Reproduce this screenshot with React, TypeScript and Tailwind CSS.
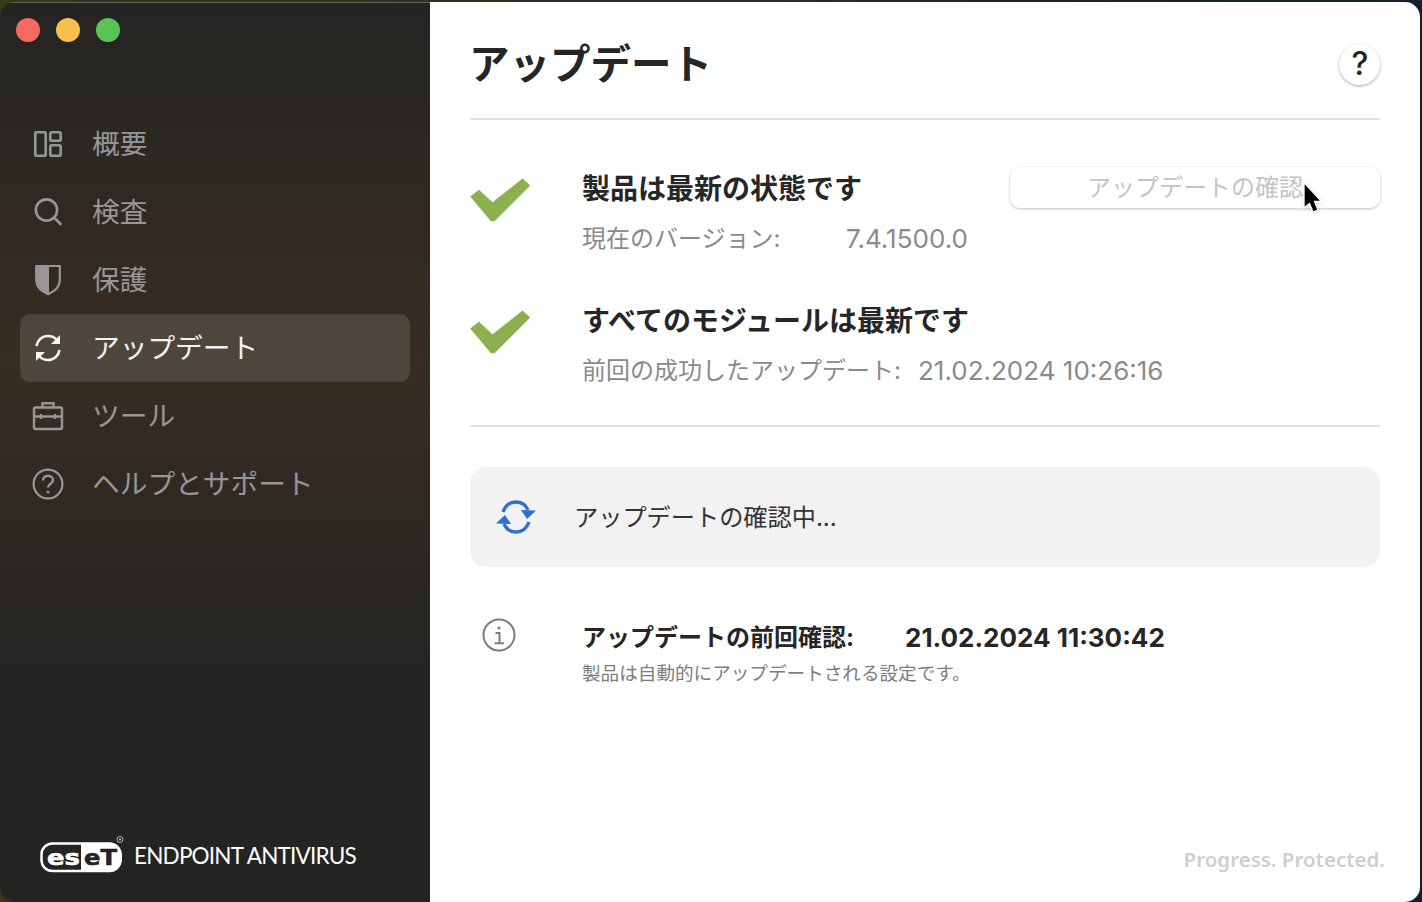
import React from "react";

const jp = "font-['Inter','Noto_Sans_CJK_JP',sans-serif]";

function Overview() {
  return (
    <svg width="30" height="28" viewBox="0 0 30 28" fill="none" stroke="currentColor" strokeWidth="2.6">
      <rect x="2.3" y="2.3" width="10.4" height="23.4" rx="1" />
      <rect x="17.3" y="2.3" width="10.4" height="8.4" rx="1.5" />
      <rect x="17.3" y="15.3" width="10.4" height="10.4" rx="1.5" />
    </svg>
  );
}
function Search() {
  return (
    <svg width="30" height="30" viewBox="0 0 30 30" fill="none" stroke="currentColor" strokeWidth="2.6" strokeLinecap="round">
      <circle cx="13.500" cy="13" r="10.6" />
      <path d="M21.500 21l6 6" />
    </svg>
  );
}
function Shield() {
  return (
    <svg width="28" height="32" viewBox="0 0 28 32" fill="none">
      <path d="M2.2 2h23.6v14c0 7-5.5 11.5-11.8 14.2C7.7 27.500 2.200 23 2.200 16z" stroke="currentColor" strokeWidth="2.200" strokeLinejoin="round" />
      <path d="M2.200 2H15v28C8 27.500 2.200 23 2.200 16z" fill="currentColor" />
    </svg>
  );
}
function Sync({ color = "currentColor", w = 30 }: { color?: string; w?: number }) {
  return (
    <svg width={w} height={w} viewBox="0 0 30 30" fill="none">
      <path d="M3.500 13C4.500 7 9 3 15 3c3.700 0 6.700 1.400 9 4" stroke={color} strokeWidth="2.600" />
      <path d="M26.500 17C25.500 23 21 27 15 27c-3.700 0-6.700-1.400-9-4" stroke={color} strokeWidth="2.600" />
      <path d="M27 2v9h-9z" fill={color} />
      <path d="M3 28v-9h9z" fill={color} />
    </svg>
  );
}
function Briefcase() {
  return (
    <svg width="32" height="30" viewBox="0 0 32 30" fill="none" stroke="currentColor" strokeWidth="2.400">
      <rect x="2" y="6.500" width="28" height="21.500" rx="1.500" />
      <path d="M10.500 6.500V2.200h11v4.300M2 15.500h28M9 13v5M23 13v5" />
    </svg>
  );
}
function Help() {
  return (
    <svg width="32" height="32" viewBox="0 0 32 32" fill="none" stroke="currentColor" strokeWidth="2.200">
      <circle cx="16" cy="16" r="14.400" />
      <path d="M11 12.500c0-3 2.200-4.800 5-4.800s5 1.800 5 4.400c0 3.900-5 3.700-5 7.400" strokeWidth="2.400" />
      <circle cx="16" cy="24" r="1.500" fill="currentColor" stroke="none" />
    </svg>
  );
}
function Check() {
  return (
    <svg width="60" height="44" viewBox="0 0 60 44">
      <path d="M0.500 18.500L9 12l13.500 12.500L52.500 0.800 60 7.500 24.500 43h-3.500z" fill="#8bb14f" stroke="#8bb14f" strokeWidth="0.500" strokeLinejoin="round" />
    </svg>
  );
}
function Info() {
  return (
    <svg width="34" height="34" viewBox="0 0 34 34" fill="none" stroke="#7d7d7d" strokeWidth="2">
      <circle cx="17" cy="17" r="15.500" />
      <circle cx="17" cy="10" r="1.600" fill="#7d7d7d" stroke="none" />
      <path d="M13.500 15H17.500V25M12.500 25.200H22" />
    </svg>
  );
}
function BlueSync() {
  return (
    <svg width="42" height="36" viewBox="0 0 42 36" fill="none">
      <path d="M8 13C10.500 6 15 3 21 3c5.500 0 9.500 2.500 12 8" stroke="#2f6fd6" strokeWidth="3.400" />
      <path d="M34 23c-2.500 7-7 10-13 10-5.500 0-9.500-2.500-12-8" stroke="#2f6fd6" strokeWidth="3.400" />
      <path d="M41 11.500L32 20l-6-9z" fill="#2f6fd6" />
      <path d="M1 24.500L10 16l6 9z" fill="#2f6fd6" />
    </svg>
  );
}
function Logo() {
  return (
    <svg width="84" height="38" viewBox="0 0 84 38" className="shrink-0">
      <rect x="1.500" y="7.500" width="79" height="27.500" rx="11" fill="none" stroke="#fff" strokeWidth="2.500" />
      <path d="M41 7h27a14 14 0 0 1 14 14a14 14 0 0 1-14 15H41z" fill="#fff" />
      <text x="7" y="28.500" fontFamily="'DejaVu Sans'" fontWeight="700" fontSize="21" fill="#fff" stroke="#fff" strokeWidth="0.600" textLength="33" lengthAdjust="spacingAndGlyphs">es</text>
      <text x="44" y="28.500" fontFamily="'DejaVu Sans'" fontWeight="700" fontSize="21" fill="#242422" stroke="#242422" strokeWidth="0.600" textLength="33" lengthAdjust="spacingAndGlyphs">eT</text>
      <circle cx="80" cy="3.500" r="3" fill="none" stroke="#ddd" strokeWidth="0.800" />
      <circle cx="80" cy="3.500" r="1" fill="#ddd" />
    </svg>
  );
}

const nav = [
  { icon: <Overview />, label: "概要" },
  { icon: <Search />, label: "検査" },
  { icon: <Shield />, label: "保護" },
  { icon: <Sync />, label: "アップデート", active: true },
  { icon: <Briefcase />, label: "ツール" },
  { icon: <Help />, label: "ヘルプとサポート" },
];

export default function App() {
  return (
    <div className={`h-[902px] w-[1422px] overflow-hidden bg-gradient-to-r from-[#3a3618] to-[#14202c] pt-[2px] pr-[2px] ${jp}`}>
      <div className="relative flex h-[900px] w-[1420px] overflow-hidden rounded-[15px]">
        <aside className="flex w-[430px] shrink-0 flex-col bg-gradient-to-b from-[#242422] via-[#372d22] via-40% to-[#242422] to-75% px-5 shadow-[inset_0_1px_0_rgba(255,255,255,0.3)]">
          <div className="-ml-[4.500px] flex h-[56px] items-center gap-[15.500px]">
            <span className="h-[24.500px] w-[24.500px] rounded-full bg-[#f26a62]" />
            <span className="h-[24.500px] w-[24.500px] rounded-full bg-[#f8bf4c]" />
            <span className="h-[24.500px] w-[24.500px] rounded-full bg-[#5ac455]" />
          </div>
          <nav className="mt-[52px] flex flex-col">
            {nav.map((n) => (
              <div
                key={n.label}
                className={`flex h-[68px] items-center rounded-[10px] text-[27.700px] ${
                  n.active ? "bg-[#4d463d] text-[#f2f2f2]" : "text-[#979797]"
                }`}
              >
                <span className="flex w-[56px] justify-center">{n.icon}</span>
                <span className="ml-4 mt-[1px] leading-none">{n.label}</span>
              </div>
            ))}
          </nav>
          <div className="mt-auto mb-[28px] ml-5 flex items-center gap-[10px]">
            <Logo />
            <span className="mt-[3px] font-['Lato',sans-serif] text-[22.500px] font-normal leading-none tracking-[-0.8px] text-white">
              ENDPOINT ANTIVIRUS
            </span>
          </div>
        </aside>
        <main className="flex flex-1 flex-col bg-white px-10">
          <header className="flex h-[118px] shrink-0 items-center justify-between border-b-2 border-[#e3e3e3] pt-[8px]">
            <h1 className="-ml-[1px] mt-[3px] text-[40.500px] font-bold leading-none text-[#262626]">アップデート</h1>
            <button className="flex h-[41px] w-[41px] items-center justify-center rounded-full bg-white pl-[1px] text-[32px] font-medium leading-none text-[#262626] shadow-[0_1px_3px_rgba(0,0,0,0.35)]">
              ?
            </button>
          </header>
          <section className="flex h-[307px] shrink-0 flex-col border-b-2 border-[#e3e3e3] pt-[48px]">
            <div className="flex h-[132px] items-start">
              <span className="mt-[10px] w-[112px] shrink-0"><Check /></span>
              <div className="flex-1">
                <div className="flex items-start justify-between">
                  <div className="-mt-[1px] text-[28px] font-bold leading-[44px] text-[#262626]">製品は最新の状態です</div>
                  <button className="mt-[-1px] h-[41px] w-[370px] rounded-[10px] bg-white text-[24px] leading-none text-[#c4c4c4] shadow-[0_1px_3px_rgba(0,0,0,0.25)]">
                    アップデートの確認
                  </button>
                </div>
                <div className="mt-[6px] flex text-[24px] leading-[44px] text-[#8a8a8a]">
                  <span className="w-[264px]">現在のバージョン:</span>
                  <span className="text-[26px]">7.4.1500.0</span>
                </div>
              </div>
            </div>
            <div className="flex items-start">
              <span className="mt-[10px] w-[112px] shrink-0"><Check /></span>
              <div className="flex-1">
                <div className="-mt-[1px] text-[28px] font-bold leading-[44px] text-[#262626]">すべてのモジュールは最新です</div>
                <div className="mt-[6px] flex text-[24px] leading-[44px] text-[#8a8a8a]">
                  <span className="w-[336px]">前回の成功したアップデート:</span>
                  <span className="text-[26px]">21.02.2024 10:26:16</span>
                </div>
              </div>
            </div>
          </section>
          <section className="mt-10 flex h-[100px] shrink-0 items-center rounded-[16px] bg-[#f2f2f2] pl-[25px]">
            <BlueSync />
            <span className="ml-[37px] mt-[2px] text-[24.200px] leading-none text-[#333333]">アップデートの確認中...</span>
          </section>
          <section className="mt-[48px] flex items-start">
            <span className="ml-[12px] mt-[3px] w-[100px] shrink-0"><Info /></span>
            <div className="mt-[1px]">
              <div className="flex items-center text-[24px] font-bold leading-[44px] text-[#262626]">
                <span className="w-[323px]">アップデートの前回確認:</span>
                <span className="text-[26px]">21.02.2024 11:30:42</span>
              </div>
              <div className="-mt-[1px] text-[18.600px] leading-[28px] text-[#7d7d7d]">製品は自動的にアップデートされる設定です。</div>
            </div>
          </section>
          <footer className="mt-auto mb-[33px] -mr-[5px] self-end font-['Noto_Sans',sans-serif] text-[20.500px] font-semibold leading-none text-[#cfcfcf]">
            Progress. Protected.
          </footer>
        </main>
        <svg className="absolute left-[1301px] top-[177px] drop-shadow-sm" width="24" height="38" viewBox="0 0 24 38">
          <path d="M3 3.500V29L8.500 24.500 12 33l5-2-3.500-8.500H20.500z" fill="#000" stroke="#fff" strokeWidth="1.300" />
        </svg>
      </div>
    </div>
  );
}
